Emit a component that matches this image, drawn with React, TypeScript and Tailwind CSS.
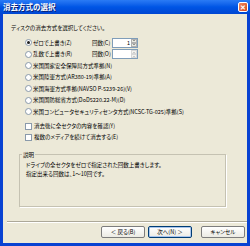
import React from "react";

const OPTIONS = [
  { label: "ゼロで上書き(Z)", spin: "1", checked: true },
  { label: "乱数で上書き(R)", spin: "", checked: false },
  { label: "米国国家安全保障局方式準拠(N)" },
  { label: "米国陸軍方式(AR380-19)準拠(A)" },
  { label: "米国海軍方式準拠(NAVSO P-5239-26)(V)" },
  { label: "米国国防総省方式(DoD5220.22-M)(D)" },
  { label: "米国コンピュータセキュリティセンタ方式(NCSC-TG-025)準拠(S)" },
];

const CHECKS = ["消去後に全セクタの内容を確認(Y)", "複数のメディアを続けて消去する(E)"];

function Radio({ on }: { on?: boolean }) {
  return (
    <span className="w-[7px] h-[7px] rounded-full border border-[#8a9aab] bg-white flex items-center justify-center shrink-0">
      {on && <span className="w-[3px] h-[3px] rounded-full bg-[#1e1e1e]" />}
    </span>
  );
}

function Spinner({ value, disabled }: { value: string; disabled?: boolean }) {
  return (
    <div className="w-[26px] h-[10px] flex border border-[#7f9db9] bg-white">
      <div className="flex-1 text-right pr-[1px] leading-[8px]">{value}</div>
      <div className="w-[6px] flex flex-col">
        <div className={"flex-1 border border-[#b0b0b0] bg-[#e8e8e0] flex items-center justify-center " + (disabled ? "opacity-50" : "")}>
          <span className="w-0 h-0 border-l-[1.5px] border-r-[1.5px] border-b-[1.5px] border-l-transparent border-r-transparent border-b-[#444]" />
        </div>
        <div className={"flex-1 border border-[#b0b0b0] bg-[#e8e8e0] flex items-center justify-center " + (disabled ? "opacity-50" : "")}>
          <span className="w-0 h-0 border-l-[1.5px] border-r-[1.5px] border-t-[1.5px] border-l-transparent border-r-transparent border-t-[#444]" />
        </div>
      </div>
    </div>
  );
}

function Btn({ children, primary }: { children: React.ReactNode; primary?: boolean }) {
  return (
    <button
      className={
        "h-[12px] w-[44px] rounded-[2px] bg-gradient-to-b from-white to-[#ecebe4] text-[5.5px] leading-[10px] text-black " +
        (primary ? "border border-[#003c74] shadow-[inset_0_0_0_1px_#a9c6ee]" : "border border-[#7d7d7d]")
      }
    >
      {children}
    </button>
  );
}

export default function App() {
  return (
    <div
      className="w-[250px] h-[246px] bg-[#0842d2] flex flex-col overflow-hidden text-black [font-feature-settings:'palt']"
      style={{ fontFamily: "'Noto Sans CJK JP', 'Liberation Sans', sans-serif" }}
    >
      {/* title bar */}
      <div className="h-[14px] flex items-center justify-between pl-[3px] pr-[2px] bg-gradient-to-b from-[#2a7bf5] via-[#0055e5] to-[#0046d2]">
        <span className="text-white font-bold text-[7.5px] leading-none [text-shadow:1px_1px_0_#0a1e6e]">消去方式の選択</span>
        <span className="w-[10px] h-[10px] rounded-[2px] border border-white bg-gradient-to-br from-[#f08a60] to-[#d2431b] flex items-center justify-center text-white text-[7px] font-bold leading-none">
          ✕
        </span>
      </div>

      {/* body */}
      <div className="flex-1 mx-[3px] mb-[3px] bg-[#ece9d8] flex flex-col text-[5.5px] leading-[8px]">
        <p className="pl-[8px] mt-[10px]">ディスクの消去方式を選択してください。</p>

        <div className="mt-[5px] pl-[22px] flex flex-col">
          {OPTIONS.map((o, i) => (
            <div key={i} className="h-[11.5px] flex items-center">
              <Radio on={o.checked} />
              <span className="ml-[1px] w-[52px] whitespace-nowrap">{o.label}</span>
              {o.spin !== undefined && (
                <>
                  <span className="ml-[7px] w-[20px]">回数({i === 0 ? "C" : "O"})</span>
                  <Spinner value={o.spin} disabled={i === 1} />
                </>
              )}
            </div>
          ))}
        </div>

        <div className="mt-[3px] pl-[22px] flex flex-col">
          {CHECKS.map((c) => (
            <div key={c} className="h-[11px] flex items-center">
              <span className="w-[7px] h-[7px] border border-[#8a9aab] bg-white shrink-0" />
              <span className="ml-[2px] whitespace-nowrap">{c}</span>
            </div>
          ))}
        </div>

        <fieldset className="mt-[8px] ml-[16px] w-[207px] h-[56px] border border-[#c5c2b2] shadow-[1px_1px_0_#fff] px-[6px] pt-0">
          <legend className="px-[1px] ml-[-4px]">説明</legend>
          <p className="leading-[9px] mt-[2px]">
            ドライブの全セクタをゼロで指定された回数上書きします。
            <br />
            指定出来る回数は、1～10回です。
          </p>
        </fieldset>

        <div className="mt-auto ml-[4px] border-t border-[#aca899] border-b border-b-white" />

        <div className="h-[20px] flex items-center justify-end gap-[3px] pr-[2px] pb-[2px]">
          <Btn>＜ 戻る(B)</Btn>
          <Btn primary>次へ(N) ＞</Btn>
          <span className="w-[3px]" />
          <Btn>キャンセル</Btn>
        </div>
      </div>
    </div>
  );
}
